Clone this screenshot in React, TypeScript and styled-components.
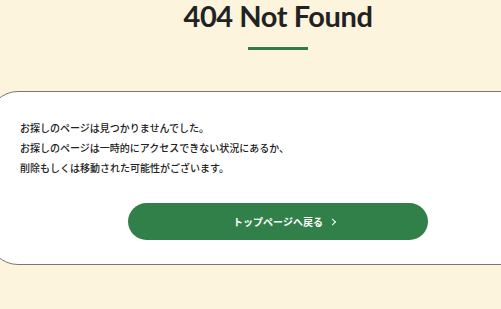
import React from "react";
import styled, { createGlobalStyle } from "styled-components";

const Global = createGlobalStyle`
  html, body {
    margin: 0;
    padding: 0;
    background: #fdf4de;
    overflow: hidden;
  }
  body {
    font-family: "Noto Sans CJK JP", "Noto Sans", sans-serif;
    color: #222;
  }
`;

const Page = styled.main`
  width: 580px;
  margin-left: -12px;
  display: flex;
  flex-direction: column;
  align-items: center;
`;

const Title = styled.h1`
  margin: 0;
  font-family: Lato, "Noto Sans", sans-serif;
  font-weight: 700;
  font-size: 29px;
  line-height: 31px;
  color: #222;
  letter-spacing: -0.015em;
`;

const Rule = styled.div`
  width: 60px;
  height: 3px;
  margin-top: 16px;
  background: #2f7d45;
`;

const Card = styled.section`
  box-sizing: border-box;
  align-self: stretch;
  margin-top: 41px;
  background: #fff;
  border: 1px solid #777;
  border-radius: 30px;
  padding: 26px 31px 24px;
  display: flex;
  flex-direction: column;
`;

const Message = styled.p`
  margin: 0;
  font-size: 10px;
  line-height: 20px;
  font-weight: 500;
  letter-spacing: 0;
  color: #222;
`;

const Button = styled.a`
  align-self: center;
  margin-top: 25px;
  width: 300px;
  height: 37px;
  border-radius: 19px;
  background: #31804a;
  color: #fff;
  display: flex;
  align-items: center;
  justify-content: center;
  text-decoration: none;
  font-size: 10px;
  font-weight: 700;
  letter-spacing: 0;
`;

const Label = styled.span`
  position: relative;
  &::after {
    content: "";
    position: absolute;
    top: 50%;
    right: -12px;
    width: 4px;
    height: 4px;
    border-top: 1.3px solid #fff;
    border-right: 1.3px solid #fff;
    transform: translateY(-50%) rotate(45deg);
  }
`;

export default function App() {
  return (
    <>
      <Global />
      <Page>
        <Title>404 Not Found</Title>
        <Rule />
        <Card>
          <Message>
            お探しのページは見つかりませんでした。
            <br />
            お探しのページは一時的にアクセスできない状況にあるか、
            <br />
            削除もしくは移動された可能性がございます。
          </Message>
          <Button href="#">
            <Label>トップページへ戻る</Label>
          </Button>
        </Card>
      </Page>
    </>
  );
}
